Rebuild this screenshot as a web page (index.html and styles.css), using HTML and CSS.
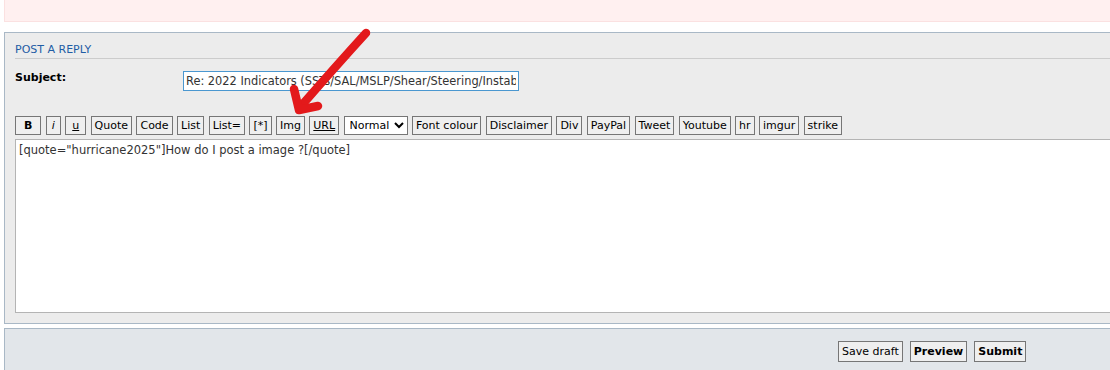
FILE: index.html
```html
<!DOCTYPE html>
<html lang="en">
<head>
  <meta charset="UTF-8">
  <title>Post a reply</title>
  <link rel="stylesheet" href="styles.css">
</head>
<body>
  <div class="notice"></div>

  <div class="panel">
    <h3>Post a reply</h3>

    <div class="subject-row">
      <label for="subject">Subject:</label>
      <input type="text" id="subject" value="Re: 2022 Indicators (SSTs/SAL/MSLP/Shear/Steering/Instability)">
    </div>

    <!-- BBCode buttons -->
    <div class="toolbar">
      <button class="bb bb-b">B</button>
      <button class="bb bb-i">i</button>
      <button class="bb bb-u">u</button>
      <button class="bb">Quote</button>
      <button class="bb">Code</button>
      <button class="bb">List</button>
      <button class="bb">List=</button>
      <button class="bb">[*]</button>
      <button class="bb">Img</button>
      <button class="bb bb-url">URL</button>
      <select class="size-select">
        <option>Normal</option>
      </select>
      <button class="bb">Font colour</button>
      <button class="bb">Disclaimer</button>
      <button class="bb">Div</button>
      <button class="bb">PayPal</button>
      <button class="bb">Tweet</button>
      <button class="bb">Youtube</button>
      <button class="bb">hr</button>
      <button class="bb">imgur</button>
      <button class="bb">strike</button>
    </div>

    <textarea class="message">[quote="hurricane2025"]How do I post a image ?[/quote]</textarea>
  </div>

  <div class="panel panel-submit">
    <div class="submit-buttons">
      <button class="btn">Save draft</button>
      <button class="btn btn-bold">Preview</button>
      <button class="btn btn-bold">Submit</button>
    </div>
  </div>

  <!-- hand drawn arrow over the page -->
  <svg class="arrow" width="1110" height="370" viewBox="0 0 1110 370">
    <path d="M366 33 Q336 66 302 105" fill="none" stroke="#e3191b" stroke-width="8.5" stroke-linecap="round"/>
    <path d="M294 89 L299 110 L318 106" fill="none" stroke="#e3191b" stroke-width="8.5" stroke-linecap="round" stroke-linejoin="round"/>
  </svg>
</body>
</html>
```

FILE: styles.css
```css
body {
  margin: 0;
  background-color: #fff;
  font-family: "DejaVu Sans", Verdana, sans-serif;
  color: #000;
  overflow: hidden;
  position: relative;
}

.notice {
  margin-left: 4px;
  margin-right: -20px;
  height: 21px;
  background-color: #fff0f0;
  border-left: 1px solid #fbe1e1;
  border-bottom: 1px solid #fbe1e1;
}

.panel {
  margin: 10px -20px 0 4px;
  padding: 10px 0 10px 10px;
  background-color: #ececec;
  border-top: 1px solid #a9b8c6;
  border-left: 1px solid #a9b8c6;
  border-bottom: 1px solid #a9b8c6;
}

.panel h3 {
  margin: 0;
  padding-bottom: 2px;
  font-size: 11px;
  line-height: 13px;
  font-weight: normal;
  text-transform: uppercase;
  color: #1f5da5;
  border-bottom: 1px solid #cccccc;
}

.subject-row {
  display: flex;
  align-items: flex-start;
  margin-top: 12px;
}

.subject-row label {
  width: 168px;
  font-size: 11px;
  font-weight: bold;
}

.subject-row input {
  width: 330px;
  height: 18px;
  margin: 0;
  padding: 0 2px;
  border: 1px solid #4a97d0;
  font-family: inherit;
  font-size: 11.4px;
  color: #333;
  box-sizing: content-box;
}

.toolbar {
  display: flex;
  gap: 4.4px;
  margin-top: 25px;
}

.bb {
  height: 19px;
  padding: 0 3px;
  background-color: #efefef;
  border: 1px solid #767676;
  font-family: inherit;
  font-size: 11px;
  color: #000;
}

.bb-b {
  font-weight: bold;
  padding: 0 8px;
}

.bb-i {
  font-style: italic;
  padding: 0 5px;
}

.bb-u,
.bb-url {
  text-decoration: underline;
}

.bb-u {
  padding: 0 6px;
}

.size-select {
  height: 19px;
  padding: 0 1px;
  background-color: #fff;
  border: 1px solid #767676;
  font-family: inherit;
  font-size: 11px;
}

.message {
  display: block;
  width: calc(100% - 6px);
  height: 166px;
  margin-top: 4px;
  padding: 3px;
  border: 1px solid #b4b4b4;
  font-family: inherit;
  font-size: 11.5px;
  color: #333;
  resize: none;
}

.panel-submit {
  margin-top: 4px;
  padding: 12px 0 20px 833px;
  background-color: #e2e6ea;
  border-bottom: none;
}

.submit-buttons {
  display: flex;
  gap: 7px;
}

.btn {
  height: 21px;
  padding: 0 3px;
  background-color: #efefef;
  border: 1px solid #767676;
  font-family: inherit;
  font-size: 11px;
  color: #000;
}

.btn-bold {
  font-weight: bold;
}

.arrow {
  position: absolute;
  top: 0;
  left: 0;
  pointer-events: none;
}
```
